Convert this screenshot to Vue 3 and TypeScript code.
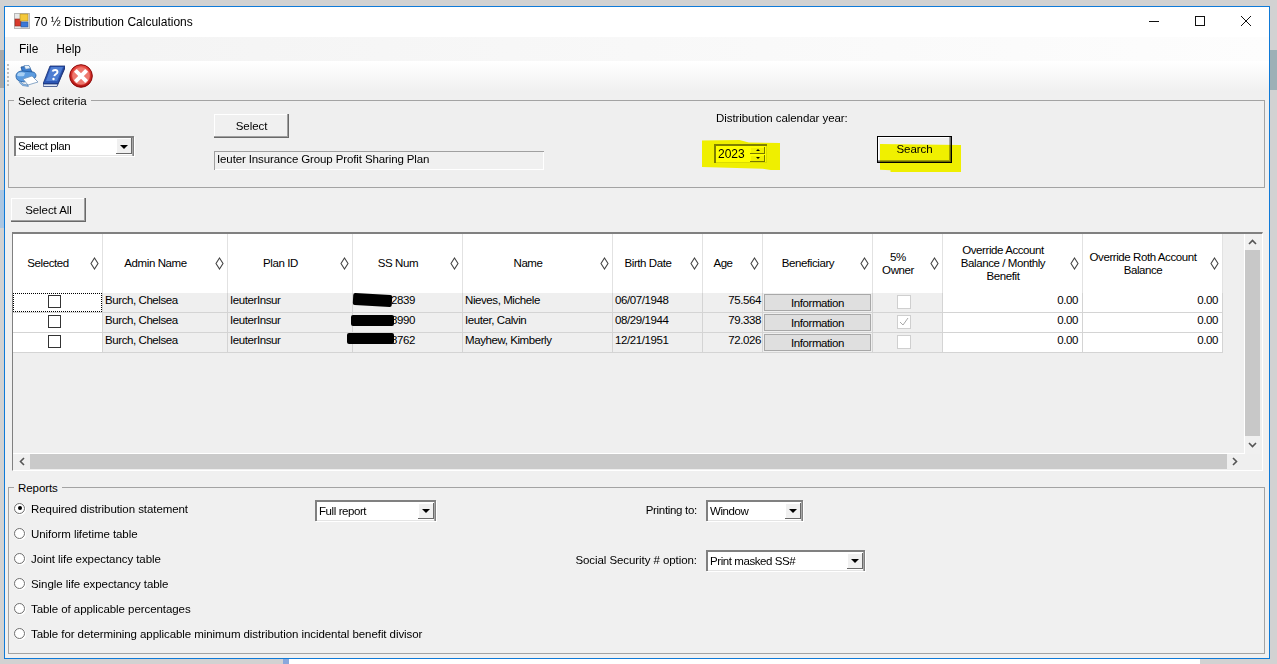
<script setup lang="ts">
interface Col { key: string; label: string[]; width: number }
interface Row { admin: string; plan: string; ss: string; name: string; birth: string; age: string; owner: boolean; redact: string }

const cols: Col[] = [
  { key: 'sel', label: ['Selected'], width: 90 },
  { key: 'admin', label: ['Admin Name'], width: 125 },
  { key: 'plan', label: ['Plan ID'], width: 125 },
  { key: 'ss', label: ['SS Num'], width: 110 },
  { key: 'name', label: ['Name'], width: 150 },
  { key: 'birth', label: ['Birth Date'], width: 90 },
  { key: 'age', label: ['Age'], width: 60 },
  { key: 'ben', label: ['Beneficiary'], width: 110 },
  { key: 'owner', label: ['5%', 'Owner'], width: 70 },
  { key: 'oab', label: ['Override Account', 'Balance / Monthly', 'Benefit'], width: 140 },
  { key: 'orb', label: ['Override Roth Account', 'Balance'], width: 140 }
]

const rows: Row[] = [
  { admin: 'Burch, Chelsea', plan: 'IeuterInsur', ss: '2839', name: 'Nieves, Michele', birth: '06/07/1948', age: '75.564', owner: false, redact: 'r1' },
  { admin: 'Burch, Chelsea', plan: 'IeuterInsur', ss: '8990', name: 'Ieuter, Calvin', birth: '08/29/1944', age: '79.338', owner: true, redact: 'r2' },
  { admin: 'Burch, Chelsea', plan: 'IeuterInsur', ss: '8762', name: 'Mayhew, Kimberly', birth: '12/21/1951', age: '72.026', owner: false, redact: 'r3' }
]

const reports: string[] = [
  'Required distribution statement',
  'Uniform lifetime table',
  'Joint life expectancy table',
  'Single life expectancy table',
  'Table of applicable percentages',
  'Table for determining applicable minimum distribution incidental benefit divisor'
]
</script>

<template>
  <div class="backdrop">
    <div class="window">
      <header class="titlebar">
        <svg class="app-icon" width="16" height="16" viewBox="0 0 16 16">
          <rect x="0.5" y="0.5" width="15" height="15" fill="#e8e8e8" stroke="#b8b8b8" />
          <rect x="1" y="6" width="6" height="7" fill="#d8392b" stroke="#8a2a20" stroke-width="0.6" />
          <rect x="6" y="1" width="8" height="7" fill="#f5c93a" stroke="#a9872a" stroke-width="0.6" />
          <rect x="7" y="9" width="7" height="5" fill="#3b78d8" stroke="#2a5a9a" stroke-width="0.6" />
        </svg>
        <span class="title">70 ½ Distribution Calculations</span>
        <div class="controls">
          <svg width="12" height="12" viewBox="0 0 12 12"><path d="M1 6.5h10" stroke="#111" fill="none" /></svg>
          <svg width="12" height="12" viewBox="0 0 12 12"><rect x="1.5" y="1.5" width="9" height="9" stroke="#111" fill="none" /></svg>
          <svg width="12" height="12" viewBox="0 0 12 12"><path d="M1 1l10 10M11 1L1 11" stroke="#111" fill="none" /></svg>
        </div>
      </header>

      <nav class="menubar">
        <span>File</span>
        <span>Help</span>
      </nav>

      <div class="toolbar">
        <span class="grip"></span>
        <svg class="tool" width="24" height="24" viewBox="0 0 24 24">
          <path d="M6 3l8-1 3 6-9 2z" fill="#3d7fd0" stroke="#1f4e8c" stroke-width="0.8" />
          <path d="M9 1.5h5l1.500 3-5 .8z" fill="#e8f2fb" stroke="#4a7cb4" stroke-width="0.6" />
          <path d="M1 12c0-3 3-5 6-5l11 1c2 .4 3 2 3 4l-1 2-6 2-5 2-5-1c-2-1-3-3-3-5z" fill="#5c9ce0" stroke="#1f5aa0" stroke-width="0.8" />
          <path d="M3 9c2-1 5-1 7 0l-1 3c-2 .5-5 .5-7-.5z" fill="#a9d0f3" />
          <path d="M8 15l9-3 6 6-10 3z" fill="#fff" stroke="#6d93bb" stroke-width="0.8" />
          <path d="M5 17l3 3 5 1 .4 1.500-6-1-3-3z" fill="#8db9e4" stroke="#3c70ad" stroke-width="0.5" />
        </svg>
        <svg class="tool help" width="22" height="24" viewBox="0 0 22 24">
          <path d="M7 2h15l-7 18H0z" fill="#2c56b4" stroke="#142c70" stroke-width="0.8" />
          <path d="M8 3h12l-6 14H3z" fill="#4f7ed2" />
          <path d="M0 20h15l-1 2.500H.5z" fill="#dfe7f5" stroke="#142c70" stroke-width="0.7" />
          <path d="M15 20l7-18v3l-8 18z" fill="#152e78" />
          <path d="M9.500 7.500c.6-1.800 5-2.200 5 .5 0 2-2.800 2-3.200 4.200" fill="none" stroke="#fff" stroke-width="1.900" />
          <circle cx="10.500" cy="15" r="1.200" fill="#fff" />
        </svg>
        <svg class="tool close" width="24" height="24" viewBox="0 0 24 24">
          <defs>
            <radialGradient id="redBall" cx="50%" cy="40%" r="60%">
              <stop offset="0" stop-color="#f6a39a" />
              <stop offset="0.6" stop-color="#e3423a" />
              <stop offset="1" stop-color="#a80b0b" />
            </radialGradient>
          </defs>
          <circle cx="12" cy="12" r="11.300" fill="url(#redBall)" stroke="#8d0a0a" />
          <circle cx="12" cy="12" r="8.800" fill="#ee7a70" />
          <path d="M7.800 7.800l8.400 8.400M16.200 7.800l-8.400 8.400" stroke="#fff" stroke-width="4" stroke-linecap="square" />
        </svg>
      </div>

      <section class="group criteria">
        <span class="legend">Select criteria</span>
        <div class="crit-plan">
          <div class="combo plan-combo"><span>Select plan</span><i class="drop"></i></div>
        </div>
        <div class="crit-select">
          <button class="btn" type="button">Select</button>
          <div class="readonly">Ieuter Insurance Group Profit Sharing Plan</div>
        </div>
        <div class="crit-year">
          <label>Distribution calendar year:</label>
          <div class="spinner">
            <span>2023</span>
            <div class="spin-btns"><i class="up"></i><i class="down"></i></div>
          </div>
        </div>
        <div class="crit-search">
          <button class="btn default" type="button">Search</button>
        </div>
        <span class="marker mark-year"></span>
        <span class="marker mark-search"></span>
      </section>

      <div class="select-all-row">
        <button class="btn" type="button">Select All</button>
      </div>

      <div class="grid-frame">
        <div class="grid-main">
          <div class="grid-area">
            <table class="data">
              <colgroup>
                <col v-for="c in cols" :key="c.key" :style="{ width: c.width + 'px' }" />
              </colgroup>
              <thead>
                <tr>
                  <th v-for="c in cols" :key="c.key">
                    <span class="th-label"><span v-for="l in c.label" :key="l">{{ l }}</span></span>
                    <svg class="sort" width="9" height="13" viewBox="0 0 9 13"><path d="M4.500 1L8 6.500 4.500 12 1 6.500z" fill="#fff" stroke="#444" stroke-width="1.100" /></svg>
                  </th>
                </tr>
              </thead>
              <tbody>
                <tr v-for="(r, i) in rows" :key="r.ss">
                  <td class="white center first" :class="{ focus: i === 0 }"><span class="check"></span></td>
                  <td>{{ r.admin }}</td>
                  <td>{{ r.plan }}</td>
                  <td class="ss">{{ r.ss }}<span class="redact" :class="r.redact"></span></td>
                  <td>{{ r.name }}</td>
                  <td>{{ r.birth }}</td>
                  <td class="num age">{{ r.age }}</td>
                  <td class="ben"><span class="info">Information</span></td>
                  <td class="center owner">
                    <span class="check disabled">
                      <svg v-if="r.owner" width="12" height="12" viewBox="0 0 12 12"><path d="M2 6l3 3 5-7" fill="none" stroke="#a8a8a8" /></svg>
                    </span>
                  </td>
                  <td class="white num">0.00</td>
                  <td class="white num">0.00</td>
                </tr>
              </tbody>
            </table>
          </div>
          <div class="vscroll">
            <svg width="9" height="6" viewBox="0 0 9 6"><path d="M1 5l3.500-3.500L8 5" fill="none" stroke="#555" stroke-width="1.600" /></svg>
            <div class="vtrack"></div>
            <svg width="9" height="6" viewBox="0 0 9 6"><path d="M1 1l3.500 3.500L8 1" fill="none" stroke="#555" stroke-width="1.600" /></svg>
          </div>
        </div>
        <div class="hscroll">
          <svg width="6" height="9" viewBox="0 0 6 9"><path d="M5 1L1.500 4.500 5 8" fill="none" stroke="#555" stroke-width="1.600" /></svg>
          <div class="htrack"></div>
          <svg width="6" height="9" viewBox="0 0 6 9"><path d="M1 1l3.500 3.500L1 8" fill="none" stroke="#555" stroke-width="1.600" /></svg>
        </div>
      </div>

      <section class="group reports">
        <span class="legend">Reports</span>
        <div class="radio-list">
          <div v-for="(t, i) in reports" :key="t" class="radio-row">
            <span class="radio" :class="{ on: i === 0 }"></span>
            <span>{{ t }}</span>
          </div>
        </div>
        <div class="combo full-combo"><span>Full report</span><i class="drop"></i></div>
        <div class="print-opts">
          <div class="opt-row">
            <label class="narrow">Printing to:</label>
            <div class="combo window-combo"><span>Window</span><i class="drop"></i></div>
          </div>
          <div class="opt-row">
            <label>Social Security # option:</label>
            <div class="combo ss-combo"><span>Print masked SS#</span><i class="drop"></i></div>
          </div>
        </div>
      </section>
    </div>
  </div>
</template>

<style>
html, body { margin: 0; padding: 0; overflow: hidden; }
</style>

<style scoped>
.backdrop {
  width: 1277px;
  height: 664px;
  box-sizing: border-box;
  padding: 6px 7px 5px 4px;
  overflow: hidden;
  font-family: "Liberation Sans", Arial, sans-serif;
  font-size: 11.5px;
  letter-spacing: -0.07px;
  color: #000;
  background:
    linear-gradient(#8aa8dc, #8aa8dc) 283px 659px / 6px 5px no-repeat,
    linear-gradient(#ffffff, #ffffff) 289px 659px / 911px 5px no-repeat,
    linear-gradient(#9db0b6, #9db0b6) 1270px 50px / 7px 40px no-repeat,
    linear-gradient(#a8a8a8, #a8a8a8) 0 50px / 4px 38px no-repeat,
    linear-gradient(#aac6e2, #aac6e2) 0 190px / 4px 38px no-repeat,
    #d2d2d2;
}
.window {
  width: 1266px;
  height: 653px;
  box-sizing: border-box;
  border: 1px solid #0f7ad8;
  background: #f0f0f0;
  display: flex;
  flex-direction: column;
}
.titlebar {
  height: 30px;
  flex: none;
  font-size: 12px;
  letter-spacing: 0;
  background: #fff;
  display: flex;
  align-items: center;
  padding-left: 9px;
}
.app-icon { margin-right: 4px; margin-top: -2px; }
.title { margin-top: -1px; }
.controls {
  margin-left: auto;
  display: flex;
  gap: 34px;
  padding-right: 17px;
  margin-top: -2px;
}
.menubar {
  height: 24px;
  flex: none;
  font-size: 12px;
  letter-spacing: 0;
  background: linear-gradient(90deg, #f3f3f3, #f8f8f8 50%, #fdfdfd);
  display: flex;
  align-items: center;
  gap: 18px;
  padding-left: 14px;
}
.toolbar {
  height: 31px;
  flex: none;
  background: linear-gradient(#ffffff, #f6f6f6 60%, #f0f0f0);
  display: flex;
  align-items: center;
  padding-left: 2px;
}
.grip {
  width: 2px;
  height: 23px;
  background: repeating-linear-gradient(#bdbdbd 0 2px, transparent 2px 4px);
  margin-right: 6px;
  margin-top: -2px;
}
.tool { display: block; margin-top: -1px; }
.help { margin-left: 4px; }
.close { margin-left: 4px; }

.group {
  position: relative;
  box-sizing: border-box;
  margin-left: 3px;
  width: 1257px;
  border: 1px solid #a3a3a3;
  flex: none;
}
.legend {
  position: absolute;
  top: -7px;
  left: 5px;
  padding: 0 4px;
  background: #f0f0f0;
  line-height: 14px;
}
.criteria {
  margin-top: 8px;
  height: 88px;
  display: flex;
  background: #efefef;
}
.crit-plan { width: 205px; padding: 35px 0 0 5px; box-sizing: border-box; }
.crit-select { width: 500px; padding-top: 13px; box-sizing: border-box; }
.crit-year { width: 163px; box-sizing: border-box; padding-top: 10px; }
.crit-year label { display: block; margin-left: 2px; line-height: 14px; }
.spinner {
  margin-top: 19px;
  width: 53px;
  height: 19px;
  box-sizing: border-box;
  font-size: 12px;
  letter-spacing: 0;
  background: #fff;
  box-shadow: inset 2px 2px 0 #808080, inset -1px -1px 0 #dcdcdc;
  display: flex;
  align-items: center;
  justify-content: space-between;
  padding: 1px 2px 0 4px;
}
.spin-btns { display: flex; flex-direction: column; gap: 1px; }
.spin-btns i {
  display: flex;
  align-items: center;
  justify-content: center;
  width: 15px;
  height: 7px;
  background: #f0f0f0;
  box-shadow: inset -1px -1px 0 #777, inset 1px 1px 0 #fff;
}
.spin-btns i::after { content: ""; border-left: 2px solid transparent; border-right: 2px solid transparent; }
.spin-btns .up::after { border-bottom: 2px solid #000; }
.spin-btns .down::after { border-top: 2px solid #000; }
.crit-search { padding-top: 35px; }

.btn {
  display: block;
  font: inherit;
  letter-spacing: inherit;
  color: #000;
  width: 75px;
  height: 24px;
  padding: 0;
  border: 0;
  background: #f0f0f0;
  box-shadow: inset -1px -1px 0 #696969, inset -2px -2px 0 #a0a0a0, inset 1px 1px 0 #fff;
}
.btn.default {
  height: 27px;
  outline: 1px solid #000;
  outline-offset: -1px;
  box-shadow: inset -2px -2px 0 #696969, inset -3px -3px 0 #a0a0a0, inset 2px 2px 0 #fff;
  padding-bottom: 2px;
}
.readonly {
  margin-top: 13px;
  width: 330px;
  height: 19px;
  box-sizing: border-box;
  padding: 1px 0 0 3px;
  line-height: 15px;
  letter-spacing: -0.12px;
  background: #f0f0f0;
  box-shadow: inset 1px 1px 0 #a0a0a0, inset -1px -1px 0 #fff;
}
.marker {
  position: absolute;
  background: #ffff00;
  mix-blend-mode: multiply;
}
.mark-year {
  left: 693px;
  top: 39px;
  width: 78px;
  height: 30px;
  clip-path: polygon(0 2%, 48% 0, 60% 8%, 100% 10%, 100% 100%, 88% 100%, 78% 96%, 0 90%);
}
.mark-search {
  left: 871px;
  top: 43px;
  width: 81px;
  height: 28px;
  clip-path: polygon(0 0, 100% 4%, 100% 100%, 13% 100%, 13% 94%, 0 92%);
}

.select-all-row { padding: 10px 0 0 6px; height: 44px; box-sizing: border-box; flex: none; }

.grid-frame {
  flex: none;
  margin-left: 7px;
  width: 1251px;
  height: 239px;
  box-sizing: border-box;
  border-top: 2px solid #808080;
  border-left: 1px solid #808080;
  border-right: 1px solid #fff;
  border-bottom: 1px solid #fff;
  background: #efefef;
  display: flex;
  flex-direction: column;
}
.grid-main { display: flex; height: 220px; flex: none; }
.grid-area {
  width: 1232px;
  border-bottom: 1px solid #fff;
  border-right: 1px solid #fff;
  box-sizing: border-box;
  overflow: hidden;
  font-size: 11.5px;
  letter-spacing: -0.42px;
}
.data {
  table-layout: fixed;
  width: 1210px;
  border-collapse: separate;
  border-spacing: 0;
}
.data th {
  height: 59px;
  padding: 0 19px 0 0;
  font-weight: 400;
  background: #fff;
  border-right: 1px solid #e2e2e2;
  position: relative;
  box-sizing: border-box;
  line-height: 13px;
  white-space: nowrap;
}
.th-label { display: flex; flex-direction: column; align-items: center; }
.sort { position: absolute; right: 3px; top: 23px; }
.data td {
  height: 20px;
  box-sizing: border-box;
  padding: 0 2px 0;
  vertical-align: top;
  line-height: 15px;
  border-right: 1px solid #d4d4d4;
  border-bottom: 1px solid #d4d4d4;
  white-space: nowrap;
  background: #efefef;
  position: relative;
}
.data td.white { background: #fff; }
.data td.num { text-align: right; padding-right: 4px; }
.data td.age { padding-right: 1px; }
.data td.center { text-align: center; padding: 2px 0 0; }
.data td.first { padding-right: 6px; }
.data td.owner { padding-right: 7px; }
.data td.ss { text-align: right; padding-right: 47px; }
.data td.ben { padding: 1px 1px 0; }
.focus::after {
  content: "";
  position: absolute;
  inset: 0;
  border: 1px dotted #000;
  box-sizing: border-box;
}
.check {
  display: inline-block;
  vertical-align: top;
  width: 13px;
  height: 13px;
  box-sizing: border-box;
  border: 1px solid #333;
  background: #fff;
}
.check.disabled { width: 14px; height: 14px; border-color: #cfcfcf; }
.check svg { display: block; }
.info {
  display: block;
  height: 17px;
  line-height: 18px;
  text-align: center;
  background: #dfdfdf;
  box-shadow: inset 0 0 0 1px #a8a8a8;
}
.redact {
  position: absolute;
  background: #000;
  border-radius: 2px;
}
.r1 { left: 0; top: 1px; width: 39px; height: 12px; transform: rotate(3deg); }
.r2 { left: -2px; top: 2px; width: 43px; height: 11px; }
.r3 { left: -6px; top: 0; width: 47px; height: 11px; }

.vscroll {
  width: 15px;
  flex: none;
  display: flex;
  flex-direction: column;
  align-items: center;
  padding-top: 5px;
  box-sizing: border-box;
  background: #f0f0f0;
}
.vtrack {
  width: 15px;
  height: 186px;
  margin: 5px 0 6px;
  background: #c8c8c8;
  flex: none;
}
.hscroll {
  height: 15px;
  flex: none;
  display: flex;
  align-items: center;
  padding-left: 6px;
}
.htrack {
  width: 1197px;
  height: 15px;
  margin: 0 5px;
  background: #cacaca;
  flex: none;
}

.reports {
  margin-top: 16px;
  height: 167px;
  display: flex;
}
.radio-list { width: 306px; flex: none; padding: 8px 0 0 5px; box-sizing: border-box; }
.radio-row {
  display: flex;
  align-items: center;
  height: 25px;
  gap: 6px;
  white-space: nowrap;
}
.radio {
  width: 11px;
  height: 11px;
  flex: none;
  box-sizing: border-box;
  border-radius: 50%;
  border: 1px solid #6e6e6e;
  background: #fff;
  box-shadow: 1px 1px 0 #fff;
  position: relative;
  margin-top: -1px;
}
.radio.on::after {
  content: "";
  position: absolute;
  left: 2.500px;
  top: 2.500px;
  width: 4px;
  height: 4px;
  border-radius: 50%;
  background: #000;
}
.combo {
  display: flex;
  align-items: center;
  justify-content: space-between;
  box-sizing: border-box;
  height: 21px;
  padding: 2px 2px 2px 4px;
  font-size: 11.5px;
  letter-spacing: -0.42px;
  background: #fff;
  box-shadow: inset 2px 2px 0 #808080, inset -1px 0 0 #808080, inset -2px 0 0 #a8a8a8, inset 0 -1px 0 #e4e4e4, 1px 1px 0 #fff;
  flex: none;
}
.drop {
  width: 16px;
  height: 16px;
  flex: none;
  display: flex;
  align-items: center;
  justify-content: center;
  background: #f0f0f0;
  box-shadow: inset -1px -1px 0 #696969, inset 1px 1px 0 #fff;
}
.drop::after {
  content: "";
  border-left: 4px solid transparent;
  border-right: 4px solid transparent;
  border-top: 4px solid #000;
  margin-top: 1px;
}
.plan-combo { width: 120px; height: 20px; }
.full-combo { width: 121px; margin-top: 12px; }
.print-opts { display: flex; flex-direction: column; gap: 29px; margin-top: 12px; }
.opt-row { display: flex; align-items: center; }
.opt-row label { width: 261px; text-align: right; margin-right: 9px; flex: none; margin-top: -2px; }
.opt-row label.narrow { letter-spacing: -0.3px; }
.window-combo { width: 97px; }
.ss-combo { width: 159px; }
</style>
